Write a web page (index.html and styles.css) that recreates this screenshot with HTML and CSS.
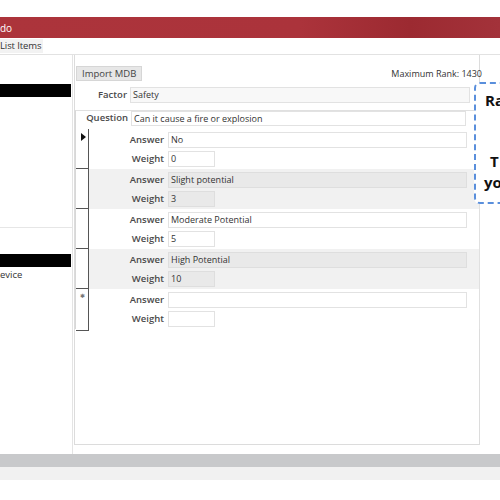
FILE: index.html
```html
<!DOCTYPE html>
<html>
<head>
<meta charset="utf-8">
<link rel="stylesheet" href="styles.css">
</head>
<body>
<div class="screen">
  <div class="topgap"></div>
  <div class="titlebar"><span class="title">do</span></div>
  <div class="tabs"><span class="tab">List Items</span></div>
  <div class="workspace">
    <div class="left">
      <div class="list upper">
        <div class="sel-bar"></div>
      </div>
      <div class="list lower">
        <div class="sel-bar"></div>
        <div class="item">evice</div>
      </div>
    </div>
    <div class="main">
      <div class="header">
        <span class="btn">Import MDB</span>
        <span class="maxrank">Maximum Rank: 1430</span>
      </div>
      <div class="row factor">
        <span class="lbl">Factor</span>
        <span class="field wide">Safety</span>
      </div>
      <div class="qbox">
        <div class="row question">
          <span class="lbl">Question</span>
          <span class="field wide">Can it cause a fire or explosion</span>
        </div>
        <div class="records">
          <div class="rec">
            <div class="selector"><span class="arrow"></span></div>
            <div class="recbody">
              <div class="frow"><span class="flbl">Answer</span><span class="field ans">No</span></div>
              <div class="frow"><span class="flbl">Weight</span><span class="field wt">0</span></div>
            </div>
          </div>
          <div class="rec alt">
            <div class="selector"></div>
            <div class="recbody">
              <div class="frow"><span class="flbl">Answer</span><span class="field ans">Slight potential</span></div>
              <div class="frow"><span class="flbl">Weight</span><span class="field wt">3</span></div>
            </div>
          </div>
          <div class="rec">
            <div class="selector"></div>
            <div class="recbody">
              <div class="frow"><span class="flbl">Answer</span><span class="field ans">Moderate Potential</span></div>
              <div class="frow"><span class="flbl">Weight</span><span class="field wt">5</span></div>
            </div>
          </div>
          <div class="rec alt">
            <div class="selector"></div>
            <div class="recbody">
              <div class="frow"><span class="flbl">Answer</span><span class="field ans">High Potential</span></div>
              <div class="frow"><span class="flbl">Weight</span><span class="field wt">10</span></div>
            </div>
          </div>
          <div class="rec new">
            <div class="selector"><span class="star">✱</span></div>
            <div class="recbody">
              <div class="frow"><span class="flbl">Answer</span><span class="field ans"></span></div>
              <div class="frow"><span class="flbl">Weight</span><span class="field wt"></span></div>
            </div>
          </div>
        </div>
      </div>
    </div>
    <div class="callout">
      <div class="c1">Ra</div>
      <div class="c2">T</div>
      <div class="c3">yo</div>
    </div>
  </div>
  <div class="statusbar"></div>
  <div class="statusbar2"></div>
</div>
</body>
</html>
```
FILE: styles.css
```css
* { box-sizing: border-box; }
html, body { margin: 0; padding: 0; background: #fff; }
body { font-family: "Open Sans", "Noto Sans", sans-serif; color: #333; }
.screen { width: 500px; height: 500px; overflow: hidden; position: relative; }

.topgap { height: 17px; }
.titlebar {
  height: 21px;
  background: linear-gradient(90deg, #ac343b 0%, #ab333b 60%, #9c2a31 82%, #a3323a 100%);
  display: flex; align-items: center;
}
.title { color: #fff; font-size: 10px; padding-left: 0; }

.tabs { height: 17px; border-bottom: 1px solid #e2e2e2; display: flex; align-items: flex-end; }
.tab {
  background: #f2f2f2; font-size: 9.5px; color: #333; line-height: 14px;
  padding: 0 2px 0 0; margin-bottom: 1px; letter-spacing: -0.1px;
}

.workspace { height: 399px; display: flex; position: relative; }
.left { width: 73px; border-right: 1px solid #e4e4e4; display: flex; flex-direction: column; }
.list.upper { height: 173px; border-bottom: 1px solid #e6e6e6; padding-top: 29px; }
.sel-bar { height: 13px; width: 71px; background: #000; }
.list.lower { padding-top: 26px; }
.item { font-size: 9.5px; line-height: 14px; color: #333; margin-top: 1px; }

.main {
  width: 406px; margin-left: 1px; height: 390px;
  border: 1px solid #dcdcdc; border-top: none; position: relative;
}
.header { height: 31px; display: flex; align-items: center; justify-content: space-between; padding-top: 6px; }
.btn {
  background: #e7e7e7; border: 1px solid #d6d6d6; font-size: 9.5px; line-height: 13px;
  padding: 0 5px; margin-left: 1px; color: #444;
}
.maxrank { font-size: 9px; color: #333; margin-right: -3px; }

.row { display: flex; align-items: center; }
.lbl { width: 54px; text-align: right; font-size: 9.5px; font-weight: 600; color: #4a4a4a; padding-right: 3px; }
.field {
  height: 16px; border: 1px solid #e2e2e2; background: #fff; font-size: 9px; line-height: 14px;
  padding-left: 2px; color: #333; white-space: nowrap; overflow: hidden;
}
.factor { height: 17px; margin-top: 0; }
.factor .lbl { width: 55px; }
.factor .field { width: 340px; background: #f8f8f8; }

.qbox {
  margin-top: 7px; margin-right: -1px;
  border-top: 1px solid #e0e0e0; border-left: 1px solid #d8d8d8; border-right: 1px solid #e0e0e0;
}
.question { height: 18px; align-items: flex-start; }
.question .lbl { width: 55px; line-height: 14px; }
.question .field { width: 335px; height: 15px; line-height: 13px; }

.records { display: flex; flex-direction: column; }
.rec { height: 40px; display: flex; }
.selector { width: 13px; border-right: 1px solid #555; border-bottom: 1px solid #555; position: relative; }
.rec.new .selector { height: 42px; }
.arrow {
  position: absolute; left: 5px; top: 4px; width: 0; height: 0;
  border-top: 4px solid transparent; border-bottom: 4px solid transparent; border-left: 5px solid #111;
}
.star { position: absolute; left: 4px; top: 3px; font-size: 6px; color: #777; }
.recbody { flex: 1; padding-top: 1px; }
.rec.alt .recbody { background: #f1f1f1; }
.frow { display: flex; align-items: center; height: 19px; }
.flbl { width: 79px; text-align: right; font-size: 9.5px; font-weight: 600; color: #4a4a4a; padding-right: 4px; }
.ans { width: 299px; height: 16px; }
.wt { width: 47px; height: 16px; }
.rec.alt .field { background: #e9e9e9; border-color: #dedede; }

.callout {
  position: absolute; left: 474px; top: 27px; width: 60px; height: 122px;
  border: 2px dashed #5a8fdc; border-radius: 6px; background: #fff;
  font-family: "Open Sans", sans-serif; font-weight: 700; color: #111; font-size: 15px;
}
.c1 { position: absolute; left: 9px; top: 6px; }
.c2 { position: absolute; left: 14px; top: 67px; }
.c3 { position: absolute; left: 8px; top: 88px; }

.statusbar { height: 13px; background: #c8c9cb; }
.statusbar2 { height: 13px; background: #f1f1f1; }
```
